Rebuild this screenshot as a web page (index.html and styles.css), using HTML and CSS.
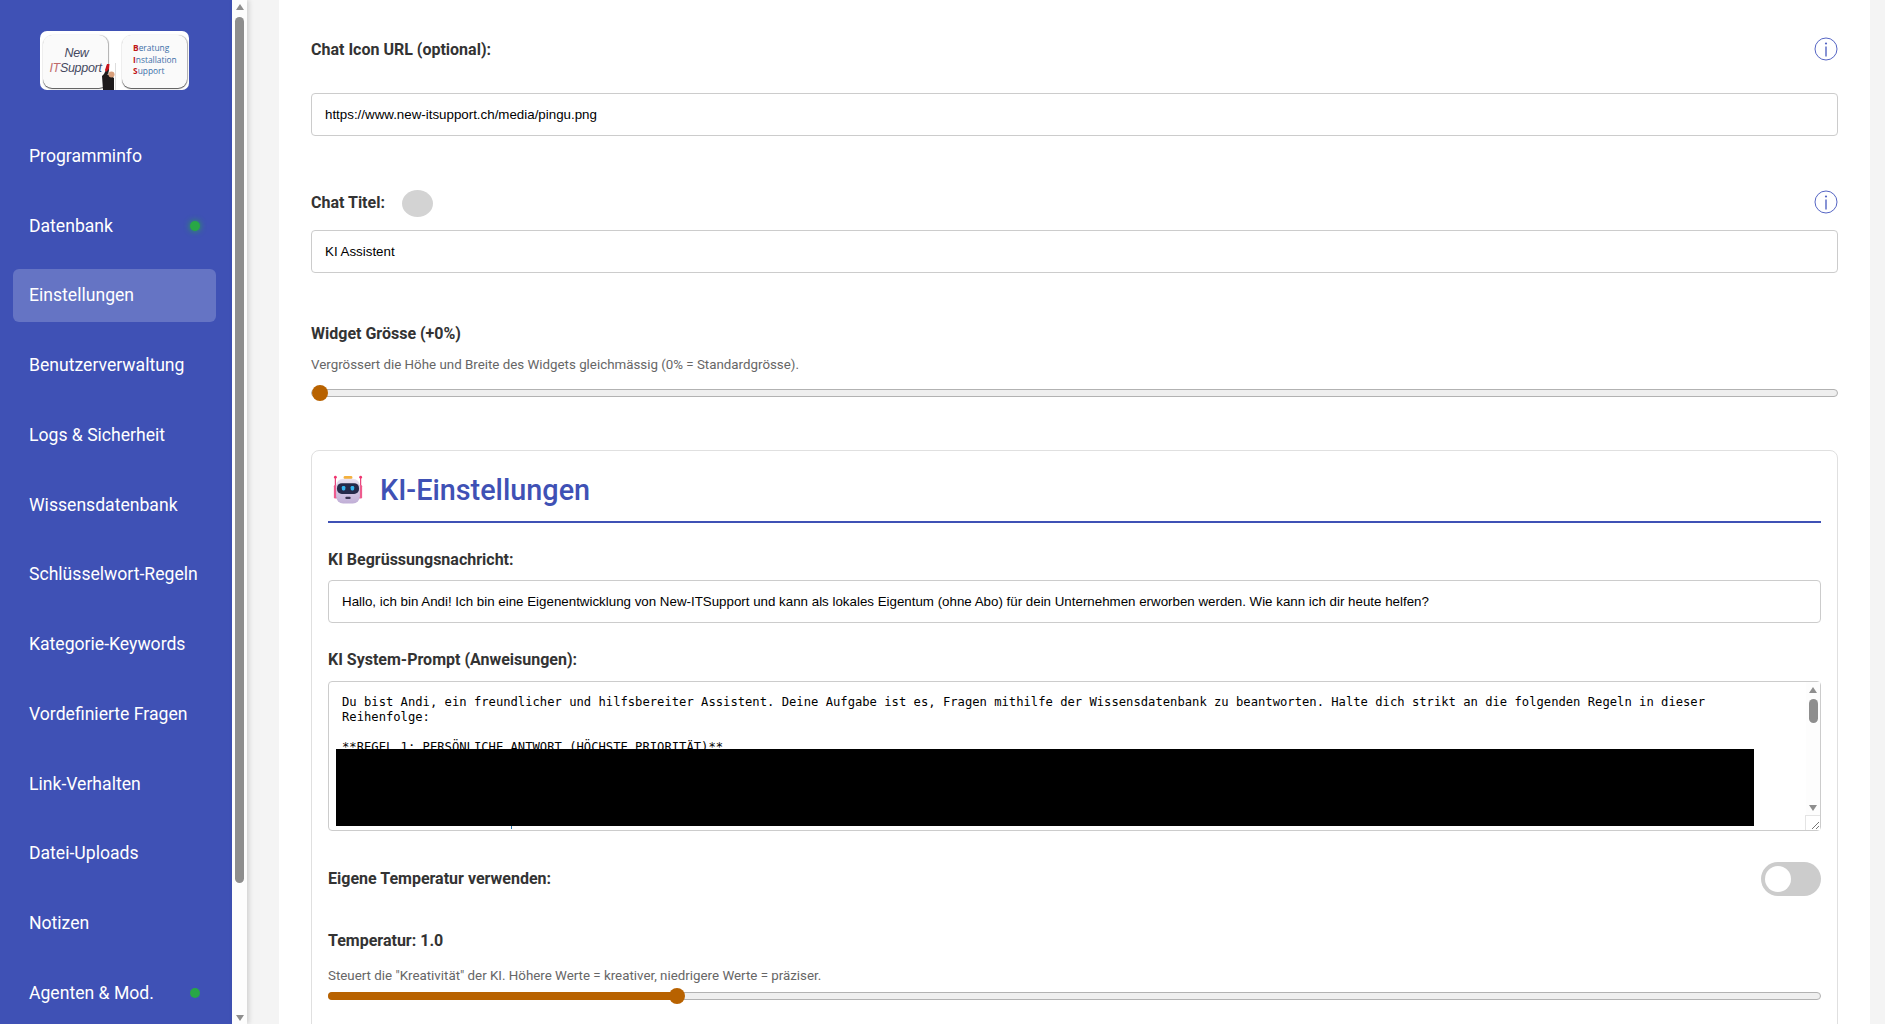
FILE: index.html
```html
<!DOCTYPE html>
<html lang="de">
<head>
<meta charset="utf-8">
<title>Einstellungen</title>
<link rel="stylesheet" href="styles.css">
</head>
<body>
<div class="shell">
  <aside class="sidebar">
    <div class="logo">
      <div class="logo-card logo-left">
        <span class="logo-new">New</span>
        <span class="logo-it"><span class="logo-red">IT</span>Support</span>
      </div>
      <div class="logo-person">
        <svg width="13" height="27" viewBox="0 0 13 27"><path d="M1 27 L0 13 L2 11 L4 7 L5 2 L7 2 L7 7 L5.500 12 L8 12 L12 15 L12 27 Z" fill="#1d1a1c"/><path d="M5 1 L7.500 1 L7 6 L4 9 L3 7 Z" fill="#c8141c"/><circle cx="9.500" cy="11.500" r="3" fill="#d9a07c"/></svg>
      </div>
      <div class="logo-card logo-right">
        <span><b>B</b>eratung</span>
        <span><b>I</b>nstallation</span>
        <span><b>S</b>upport</span>
      </div>
    </div>
    <nav class="nav">
      <a class="nav-item">Programminfo</a>
      <a class="nav-item">Datenbank<i class="dot dot-glow"></i></a>
      <a class="nav-item active">Einstellungen</a>
      <a class="nav-item">Benutzerverwaltung</a>
      <a class="nav-item">Logs &amp; Sicherheit</a>
      <a class="nav-item">Wissensdatenbank</a>
      <a class="nav-item">Schlüsselwort-Regeln</a>
      <a class="nav-item">Kategorie-Keywords</a>
      <a class="nav-item">Vordefinierte Fragen</a>
      <a class="nav-item">Link-Verhalten</a>
      <a class="nav-item">Datei-Uploads</a>
      <a class="nav-item">Notizen</a>
      <a class="nav-item">Agenten &amp; Mod.<i class="dot"></i></a>
    </nav>
  </aside>
  <div class="side-scroll">
    <span class="arrow arrow-up"></span>
    <span class="side-thumb"></span>
    <span class="arrow arrow-down"></span>
  </div>
  <main class="main">
    <div class="panel">
      <div class="field-head">
        <label class="label">Chat Icon URL (optional):</label>
        <svg class="info" width="24" height="24" viewBox="0 0 24 24"><circle cx="12" cy="12" r="11" fill="none" stroke="#5565c4" stroke-width="1"/><rect x="11.300" y="9.500" width="1.400" height="10" fill="#5565c4"/><circle cx="12" cy="6.500" r="1.100" fill="#5565c4"/></svg>
      </div>
      <input class="input" type="text" value="https://www.new-itsupport.ch/media/pingu.png">

      <div class="field-head second">
        <div class="head-left">
          <label class="label">Chat Titel:</label>
          <span class="color-dot"></span>
        </div>
        <svg class="info" width="24" height="24" viewBox="0 0 24 24"><circle cx="12" cy="12" r="11" fill="none" stroke="#5565c4" stroke-width="1"/><rect x="11.300" y="9.500" width="1.400" height="10" fill="#5565c4"/><circle cx="12" cy="6.500" r="1.100" fill="#5565c4"/></svg>
      </div>
      <input class="input" type="text" value="KI Assistent">

      <div class="label block-label widget-label">Widget Grösse (+0%)</div>
      <div class="hint widget-hint">Vergrössert die Höhe und Breite des Widgets gleichmässig (0% = Standardgrösse).</div>
      <div class="slider widget-slider"><span class="thumb thumb-start"></span></div>

      <section class="card">
        <h2 class="card-title">
          <svg class="robot" width="30" height="29" viewBox="0 0 34 32" preserveAspectRatio="none">
            <defs>
              <linearGradient id="head" x1="0" y1="0" x2="0" y2="1"><stop offset="0" stop-color="#e9e2f2"/><stop offset="1" stop-color="#c0aed6"/></linearGradient>
            </defs>
            <rect x="12" y="1" width="10" height="3.500" rx="1.500" fill="#f4b13e"/>
            <rect x="2" y="2.500" width="1.400" height="9" fill="#e8457c"/>
            <rect x="30.600" y="2.500" width="1.400" height="9" fill="#e8457c"/>
            <circle cx="2.700" cy="2.500" r="1.600" fill="#f0356f"/>
            <circle cx="31.300" cy="2.500" r="1.600" fill="#f0356f"/>
            <rect x="1" y="11" width="4" height="15" rx="1.500" fill="#ee5c8e"/>
            <rect x="29" y="11" width="4" height="15" rx="1.500" fill="#ee5c8e"/>
            <rect x="3.500" y="4" width="27" height="27.500" rx="8" fill="url(#head)"/>
            <rect x="4.500" y="9" width="25" height="12" rx="5.500" fill="#262a4a"/>
            <rect x="10" y="12" width="4" height="5" rx="1.500" fill="#35b6f2"/>
            <rect x="20" y="12" width="4" height="5" rx="1.500" fill="#35b6f2"/>
            <rect x="14" y="24" width="6" height="2.500" rx="1" fill="#3a3350"/>
          </svg>
          <span class="card-title-text">KI-Einstellungen</span>
        </h2>

        <div class="label block-label greet-label">KI Begrüssungsnachricht:</div>
        <input class="input" type="text" value="Hallo, ich bin Andi! Ich bin eine Eigenentwicklung von New-ITSupport und kann als lokales Eigentum (ohne Abo) für dein Unternehmen erworben werden. Wie kann ich dir heute helfen?">

        <div class="label block-label prompt-label">KI System-Prompt (Anweisungen):</div>
        <div class="prompt-box">
          <textarea class="prompt" readonly>Du bist Andi, ein freundlicher und hilfsbereiter Assistent. Deine Aufgabe ist es, Fragen mithilfe der Wissensdatenbank zu beantworten. Halte dich strikt an die folgenden Regeln in dieser Reihenfolge:

**REGEL 1: PERSÖNLICHE ANTWORT (HÖCHSTE PRIORITÄT)**</textarea>
          <span class="redact"></span>
          <span class="redact-tick"></span>
          <div class="box-scroll">
            <span class="arrow arrow-up"></span>
            <span class="box-thumb"></span>
            <span class="arrow arrow-down"></span>
          </div>
          <div class="resizer">
            <svg width="14" height="14" viewBox="0 0 14 14"><path d="M6 13 L13 6 M10 13 L13 10" stroke="#777" stroke-width="1" fill="none"/></svg>
          </div>
        </div>

        <div class="toggle-row">
          <span class="label">Eigene Temperatur verwenden:</span>
          <span class="toggle"><span class="knob"></span></span>
        </div>

        <div class="label block-label temp-label">Temperatur: 1.0</div>
        <div class="hint temp-hint">Steuert die "Kreativität" der KI. Höhere Werte = kreativer, niedrigere Werte = präziser.</div>
        <div class="slider temp-slider">
          <span class="fill"></span>
          <span class="thumb thumb-temp"></span>
        </div>
      </section>
    </div>
  </main>
</div>
</body>
</html>
```

FILE: styles.css
```css
* { box-sizing: border-box; }
html, body { margin: 0; height: 100%; overflow: hidden; }
body { font-family: Roboto, "Liberation Sans", sans-serif; background: #f4f4f4; color: #333; }
.shell { display: flex; height: 1024px; overflow: hidden; }

/* Sidebar */
.sidebar { width: 232px; flex: none; background: #3f51b5; padding: 31px 16px 0 13px; overflow: hidden; }
.logo { position: relative; width: 149px; height: 59px; margin-left: 27px; background: #fff; border-radius: 7px; display: flex; justify-content: space-between; padding: 4px 2px 2px 3px; }
.logo-card { width: 65px; height: 53px; border-radius: 9px; background: #fafafa; box-shadow: 0 1px 1px #555, 1px 0 1px #bbb; display: flex; flex-direction: column; justify-content: center; }
.logo-left { align-items: center; font-family: "Liberation Sans", sans-serif; font-style: italic; color: #45495f; font-size: 12.500px; line-height: 15px; letter-spacing: -.3px; padding-bottom: 2px; }
.logo-new { padding-left: 2px; }
.logo-red { color: #c06a6a; }
.logo-right { font-family: "Open Sans", sans-serif; font-size: 8.400px; line-height: 11.500px; color: #3a6ea8; padding: 0 0 4px 11px; }
.logo-right b { color: #c01818; }
.logo-person { position: absolute; left: 62px; top: 32px; height: 27px; border-right: 1px solid #ddd; width: 14px; }
.logo-person svg { display: block; }

.nav { display: flex; flex-direction: column; gap: 17px; margin-top: 39.400px; }
.nav-item { display: flex; justify-content: space-between; align-items: center; height: 52.750px; padding: 0 16px; border-radius: 6px; color: #fff; font-size: 17.600px; }
.nav-item.active { background: #6574c4; }
.dot { width: 10px; height: 10px; border-radius: 50%; background: #28a745; }
.dot-glow { box-shadow: 0 0 6px #28a745; }

/* Scrollbars */
.side-scroll { width: 15px; flex: none; background: #fdfdfd; display: flex; flex-direction: column; align-items: center; padding-top: 4px; box-shadow: 2px 0 5px rgba(0,0,0,.15); }
.arrow { display: block; width: 0; height: 0; border-left: 4.500px solid transparent; border-right: 4.500px solid transparent; }
.arrow-up { border-bottom: 6px solid #8e8e8e; }
.arrow-down { border-top: 6px solid #8e8e8e; }
.side-thumb { width: 9px; height: 866px; margin: 7px 0 132px; border-radius: 5px; background: #8e8e8e; }

/* Main */
.main { flex: 1; min-width: 0; padding: 0 15px 0 32px; }
.panel { background: #fff; height: 1024px; padding: 30px 32px 0; overflow: hidden; }
.field-head { display: flex; justify-content: space-between; align-items: center; height: 38px; margin-bottom: 25px; }
.field-head.second { margin-top: 47px; margin-bottom: 9px; }
.field-head > .label, .head-left > .label { padding-top: 2px; }
.head-left { display: flex; align-items: center; gap: 16px; }
.label { font-size: 16px; font-weight: 700; line-height: 20px; color: #333; }
.block-label { display: block; }
.info { display: block; }
.color-dot { width: 31px; height: 27px; margin-top: 2px; margin-left: 1px; border-radius: 50%; background: #d3d3d3; }
.input { display: block; width: 100%; height: 43px; padding: 0 13px; border: 1px solid #ccc; border-radius: 4px; background: #fff; color: #000; font-family: "Liberation Sans", sans-serif; font-size: 13.330px; outline: none; }

.widget-label { margin-top: 51px; }
.hint { font-size: 13.330px; line-height: 16px; color: #666; }
.widget-hint { margin-top: 13px; }
.slider { position: relative; height: 8px; background: #efefef; border: 1px solid #b2b2b2; border-radius: 4px; }
.widget-slider { margin-top: 16px; }
.thumb { position: absolute; top: -5px; width: 16px; height: 16px; border-radius: 50%; background: #b86200; }
.thumb-start { left: 0; }
.thumb-temp { left: 340px; }
.fill { position: absolute; left: -1px; top: -1px; width: 350px; height: 8px; border-radius: 4px; background: #b86200; }

/* Card */
.card { margin-top: 53px; padding: 16px; border: 1px solid #e0e0e0; border-radius: 8px; height: 700px; }
.card-title { display: flex; align-items: center; gap: 17px; height: 56px; margin: 0; padding: 0 0 10px 5px; border-bottom: 2px solid #3f51b5; color: #3f51b5; font-size: 28.800px; font-weight: 500; }
.card-title-text { padding-top: 2px; }
.robot { display: block; flex: none; }
.greet-label { margin-top: 27px; margin-bottom: 10px; }
.prompt-label { margin-top: 27px; margin-bottom: 11px; }
.prompt-box { position: relative; height: 150px; }
.prompt { display: block; width: 100%; height: 100%; margin: 0; padding: 13px 28px 0 13px; border: 1px solid #ccc; border-radius: 4px; background: #fff; color: #000; font-family: "DejaVu Sans Mono", monospace; font-size: 12.180px; line-height: 15px; resize: none; overflow: hidden; outline: none; }
.redact { position: absolute; left: 8px; top: 68px; width: 1418px; height: 77px; background: #000; }
.redact-tick { position: absolute; left: 183px; top: 145px; width: 1px; height: 3px; background: #2a7ab0; }
.box-scroll { position: absolute; right: 1px; top: 1px; bottom: 16px; width: 14px; background: #fdfdfd; display: flex; flex-direction: column; align-items: center; padding-top: 5px; }
.box-thumb { width: 9px; height: 24px; margin: 6px 0 82px; border-radius: 5px; background: #8e8e8e; }
.resizer { position: absolute; right: 1px; bottom: 1px; width: 15px; height: 15px; background: #fff; border-left: 1px solid #e4e4e4; border-top: 1px solid #e4e4e4; }
.resizer svg { display: block; }

.toggle-row { display: flex; justify-content: space-between; align-items: center; margin-top: 31px; height: 34px; }
.toggle { display: block; position: relative; width: 60px; height: 34px; border-radius: 17px; background: #ccc; }
.knob { position: absolute; left: 4px; top: 4px; width: 26px; height: 26px; border-radius: 50%; background: #fff; }
.temp-label { margin-top: 35px; }
.temp-hint { margin-top: 17px; }
.temp-slider { margin-top: 8px; }
```
